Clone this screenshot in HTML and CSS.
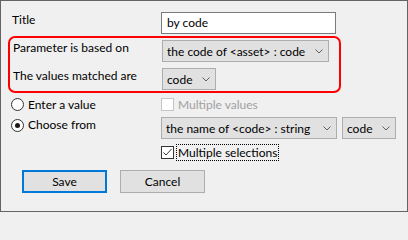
FILE: index.html
```html
<!DOCTYPE html>
<html>
<head>
<meta charset="utf-8">
<link rel="stylesheet" href="styles.css">
</head>
<body>
<div class="dlg">
  <div class="row r-title">
    <span class="lbl">Title</span>
    <div class="input">by code</div>
  </div>
  <div class="group">
    <div class="row">
      <span class="lbl">Parameter is based on</span>
      <div class="combo w1"><span class="ct">the code of &lt;asset&gt; : code</span><svg class="chev" width="8" height="5" viewBox="0 0 8 5"><polyline points="0.5,0.5 4,4 7.5,0.5" fill="none" stroke="#5f5f5f" stroke-width="1"/></svg></div>
    </div>
    <div class="row r-second">
      <span class="lbl">The values matched are</span>
      <div class="combo w2"><span class="ct">code</span><svg class="chev" width="8" height="5" viewBox="0 0 8 5"><polyline points="0.5,0.5 4,4 7.5,0.5" fill="none" stroke="#5f5f5f" stroke-width="1"/></svg></div>
    </div>
  </div>
  <div class="row r-opt">
    <label class="radio"><span class="rb"></span>Enter a value</label>
    <label class="check disabled"><span class="cb"></span>Multiple values</label>
  </div>
  <div class="row r-choose">
    <label class="radio"><span class="rb on"></span>Choose from</label>
    <div class="combo w3"><span class="ct">the name of &lt;code&gt; : string</span><svg class="chev" width="8" height="5" viewBox="0 0 8 5"><polyline points="0.5,0.5 4,4 7.5,0.5" fill="none" stroke="#5f5f5f" stroke-width="1"/></svg></div>
    <div class="combo w4"><span class="ct">code</span><svg class="chev" width="8" height="5" viewBox="0 0 8 5"><polyline points="0.5,0.5 4,4 7.5,0.5" fill="none" stroke="#5f5f5f" stroke-width="1"/></svg></div>
  </div>
  <div class="row r-multi">
    <label class="check"><span class="cb on"><svg width="11" height="11" viewBox="0 0 11 11"><polyline points="1.5,5.5 4,8 9.5,2" fill="none" stroke="#333" stroke-width="1"/></svg></span><span class="focus">Multiple selections</span></label>
  </div>
  <div class="buttons">
    <button class="btn primary">Save</button>
    <button class="btn">Cancel</button>
  </div>
</div>
</body>
</html>
```
FILE: styles.css
```css
html, body {
  margin: 0;
  padding: 0;
  background: #f0f0f0;
}
.dlg {
  width: 408px;
  height: 212px;
  box-sizing: border-box;
  border: 1px solid #646464;
  background: #f0f0f0;
  padding: 11px 0 0 11px;
  font-family: Lato, "Noto Sans", sans-serif;
  font-size: 12px;
  color: #000;
  display: flex;
  flex-direction: column;
  align-items: flex-start;
}
.row {
  display: flex;
  align-items: flex-start;
}
.lbl {
  width: 149px;
  line-height: 16px;
  flex: none;
}
.input {
  width: 175px;
  height: 22px;
  box-sizing: border-box;
  border: 1px solid #7a7a7a;
  background: #fff;
  padding-left: 5px;
  line-height: 20px;
}
.group {
  margin: 2px 0 0 -4px;
  width: 333px;
  box-sizing: border-box;
  border: 2px solid #ff0000;
  border-radius: 7px;
  padding: 2px 0 1px 3px;
}
.r-second {
  margin-top: 6px;
}
.combo {
  height: 22px;
  box-sizing: border-box;
  border: 1px solid #adadad;
  background: #e1e1e1;
  display: flex;
  align-items: center;
  justify-content: space-between;
  padding: 0 5px 0 4px;
  flex: none;
}
.ct {
  white-space: nowrap;
}
.chev {
  flex: none;
}
.w1 { width: 167px; }
.w2 { width: 54px; }
.w3 { width: 176px; }
.w4 { width: 54px; margin-left: 5px; }
.r-opt {
  margin-top: 3px;
  height: 17px;
  align-items: center;
}
.radio {
  width: 149px;
  flex: none;
  display: flex;
  align-items: center;
  line-height: 16px;
  height: 16px;
}
.rb {
  width: 11px;
  height: 11px;
  border: 1px solid #333;
  border-radius: 50%;
  background: #fff;
  margin: 0 4px 0 -1px;
  position: relative;
  flex: none;
}
.rb.on::after {
  content: "";
  position: absolute;
  left: 3px;
  top: 3px;
  width: 5px;
  height: 5px;
  border-radius: 50%;
  background: #1a1a1a;
}
.check {
  display: flex;
  align-items: center;
  line-height: 15px;
}
.cb {
  width: 11px;
  height: 11px;
  border: 1px solid #333;
  background: #fff;
  margin-right: 3px;
  flex: none;
  display: flex;
}
.check.disabled {
  color: #a0a0a0;
}
.check.disabled .cb {
  border-color: #c6c6c6;
  margin-right: 4px;
}
.r-choose {
  margin-top: 4px;
}
.r-multi {
  margin-top: 6px;
  padding-left: 149px;
}
.focus {
  outline: 1px dotted #000;
  outline-offset: 0;
  padding: 0 1px;
}
.buttons {
  display: flex;
  gap: 13px;
  margin: 10px 0 0 10px;
}
.btn {
  width: 85px;
  height: 23px;
  box-sizing: border-box;
  border: 1px solid #adadad;
  background: #e1e1e1;
  font-family: inherit;
  font-size: 12px;
  color: #000;
  padding: 0;
  margin: 0;
}
.btn.primary {
  border: 2px solid #0078d7;
}
```
